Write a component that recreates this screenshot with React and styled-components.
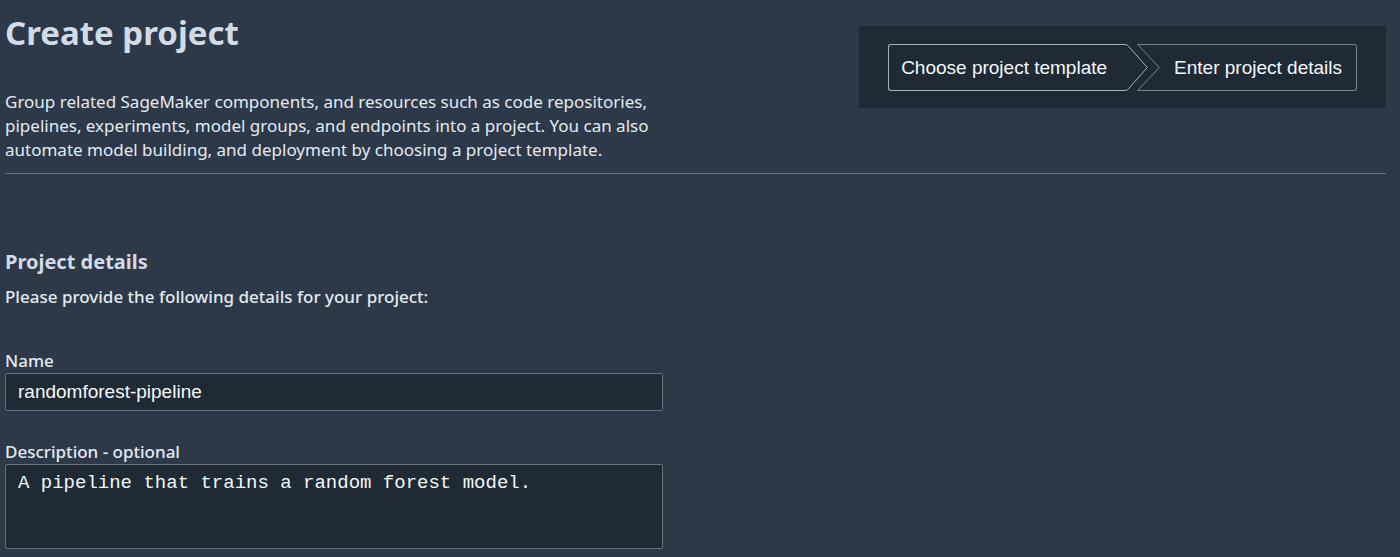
import React from "react";
import styled, { createGlobalStyle } from "styled-components";

const GlobalStyle = createGlobalStyle`
  *, *::before, *::after { box-sizing: border-box; }
  body {
    margin: 0;
    background: #2d3949;
    color: #e3eaf2;
    font: 500 17px/24px "Noto Sans", "Open Sans", sans-serif;
  }
`;

const Page = styled.main`
  padding: 8px 14px 8px 5px;
`;

const Header = styled.header`
  display: flex;
  justify-content: space-between;
  align-items: flex-start;
  padding-bottom: 11px;
  border-bottom: 1px solid #69777f;
`;

const Intro = styled.div`
  width: 656px;
`;

const Title = styled.h1`
  margin: 0 0 32px;
  color: #d2dbe6;
  font-size: 33px;
  line-height: 50px;
  font-weight: 700;
`;

const Text = styled.p`
  margin: 0;
  font-weight: ${(p) => (p.$light ? 400 : 500)};
`;

const Steps = styled.ol`
  display: flex;
  margin: 18px 0 0;
  padding: 18px 29px 17px;
  list-style: none;
  background: #1f2a35;
`;

const Step = styled.li`
  display: flex;
  height: 47px;
  color: ${(p) => (p.$first ? "#a9b6b9" : "#75858f")};
  margin-left: ${(p) => (p.$first ? "0" : "-11px")};
`;

const StepLabel = styled.span`
  display: flex;
  align-items: center;
  padding: ${(p) => (p.$first ? "0 18px 0 12px" : "0 14px")};
  border: 1px solid currentColor;
  border-width: ${(p) => (p.$first ? "1px 0 1px 1px" : "1px 1px 1px 0")};
  border-radius: ${(p) => (p.$first ? "3px 0 0 3px" : "0 3px 3px 0")};
  font: 19px/24px "Liberation Sans", Arial, sans-serif;
  white-space: nowrap;
  & > span { color: #f3f8fc; }
`;

const StepEdge = styled.svg`
  display: block;
  flex: none;
  width: 23px;
  height: 47px;
  fill: none;
  stroke: currentColor;
`;

const Section = styled.section`
  padding-top: 74px;
`;

const SectionTitle = styled.h2`
  margin: 0 0 9px;
  color: #d2dbe6;
  font-size: 20px;
  line-height: 28px;
  font-weight: 700;
`;

const Field = styled.div`
  display: flex;
  flex-direction: column;
  max-width: 658px;
  margin-top: ${(p) => (p.$spaced ? "40px" : "29px")};
`;

const control = `
  display: block;
  width: 100%;
  margin: 0;
  border: 1px solid #65727a;
  border-radius: 2px;
  background: #1f2a35;
  color: #f3f8fc;
  outline: none;
`;

const TextInput = styled.input`
  ${control}
  height: 38px;
  padding: 0 12px;
  font: 19px/24px "Liberation Sans", Arial, sans-serif;
`;

const TextArea = styled.textarea`
  ${control}
  height: 85px;
  padding: 6px 12px;
  resize: none;
  font: 19px/24px "Liberation Mono", "Courier New", monospace;
`;

export default function App() {
  return (
    <>
      <GlobalStyle />
      <Page>
        <Header>
          <Intro>
            <Title>Create project</Title>
            <Text $light>
              Group related SageMaker components, and resources such as code
              repositories, pipelines, experiments, model groups, and endpoints
              into a project. You can also automate model building, and
              deployment by choosing a project template.
            </Text>
          </Intro>
          <Steps>
            <Step $first>
              <StepLabel $first>
                <span>Choose project template</span>
              </StepLabel>
              <StepEdge viewBox="0 0 23 47" aria-hidden="true">
                <path d="M0 .5Q2 .5 3 1.700L22.300 23.500L3 45.300Q2 46.500 0 46.500" />
              </StepEdge>
            </Step>
            <Step aria-current="step">
              <StepEdge viewBox="0 0 23 47" aria-hidden="true">
                <path d="M23 .5H.7L22.300 23.500L.7 46.500H23" />
              </StepEdge>
              <StepLabel>
                <span>Enter project details</span>
              </StepLabel>
            </Step>
          </Steps>
        </Header>
        <Section>
          <SectionTitle>Project details</SectionTitle>
          <Text>Please provide the following details for your project:</Text>
          <Field $spaced>
            <label htmlFor="name">Name</label>
            <TextInput id="name" type="text" defaultValue="randomforest-pipeline" spellCheck={false} />
          </Field>
          <Field>
            <label htmlFor="description">Description - optional</label>
            <TextArea
              id="description"
              defaultValue="A pipeline that trains a random forest model."
              spellCheck={false}
            />
          </Field>
        </Section>
      </Page>
    </>
  );
}
